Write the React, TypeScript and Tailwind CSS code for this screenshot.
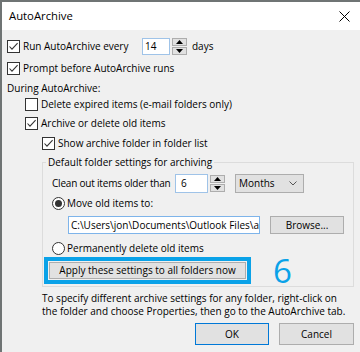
import React from 'react';

const Check: React.FC<{ checked?: boolean }> = ({ checked }) => (
  <span className="flex w-[13px] h-[13px] shrink-0 items-center justify-center border border-[#333333] bg-white">
    {checked && (
      <svg width="11" height="11" viewBox="0 0 11 11" fill="none">
        <path d="M1.5 5.5L4 8.2L9.6 2.2" stroke="#333333" strokeWidth="1.1" />
      </svg>
    )}
  </span>
);

const Radio: React.FC<{ checked?: boolean }> = ({ checked }) => (
  <span className="flex w-[13px] h-[13px] shrink-0 items-center justify-center rounded-full border border-[#333333] bg-white">
    {checked && <span className="w-[7px] h-[7px] rounded-full bg-[#333333]" />}
  </span>
);

const Spinner: React.FC = () => (
  <div className="flex flex-col w-[15px] h-[17px] gap-px">
    <div className="flex flex-1 items-center justify-center border border-[#adadad] bg-[#e1e1e1]">
      <svg width="7" height="4" viewBox="0 0 7 4">
        <path d="M0 4L3.5 0L7 4Z" fill="#000" />
      </svg>
    </div>
    <div className="flex flex-1 items-center justify-center border border-[#adadad] bg-[#e1e1e1]">
      <svg width="7" height="4" viewBox="0 0 7 4">
        <path d="M0 0L3.5 4L7 0Z" fill="#000" />
      </svg>
    </div>
  </div>
);

const Btn: React.FC<{ label: string; className?: string }> = ({ label, className }) => (
  <div
    className={
      'flex shrink-0 items-center justify-center border bg-[#e1e1e1] ' + (className ?? '')
    }
  >
    {label}
  </div>
);

export default function App() {
  return (
    <div className="w-[360px] h-[352px] flex flex-col overflow-hidden whitespace-nowrap border-l-2 border-t-2 border-[#6f7474] bg-[#f0f0f0] text-black font-['Open_Sans',sans-serif] text-[10px]">
      {/* title bar */}
      <div className="h-[28px] shrink-0 flex items-center bg-white pl-[7px] pr-[10px]">
        <span className="text-[11.3px]">AutoArchive</span>
        <svg className="ml-auto" width="11" height="11" viewBox="0 0 11 11">
          <path d="M0.5 0.5L10.5 10.5M10.5 0.5L0.5 10.5" stroke="#000" strokeWidth="1" />
        </svg>
      </div>

      <div className="flex flex-col pl-[5px] pt-[5px]">
        <div className="h-[22px] flex items-center">
          <Check checked />
          <span className="ml-[3px] w-[119px] shrink-0">Run AutoArchive every</span>
          <div className="w-[28px] h-[17px] shrink-0 flex items-center border border-[#9fc3e8] bg-white pl-[2px]">14</div>
          <div className="ml-[2px]">
            <Spinner />
          </div>
          <span className="ml-[5px]">days</span>
        </div>

        <div className="h-[22px] flex items-center">
          <Check checked />
          <span className="ml-[3px]">Prompt before AutoArchive runs</span>
        </div>

        <div className="h-[18px] flex items-center">During AutoArchive:</div>

        <div className="h-[15px] flex items-center pl-[18px]">
          <Check />
          <span className="ml-[3px]">Delete expired items (e-mail folders only)</span>
        </div>

        <div className="h-[22px] flex items-center pl-[18px]">
          <Check checked />
          <span className="ml-[3px]">Archive or delete old items</span>
        </div>

        <div className="h-[18px] flex items-center pl-[35px]">
          <Check checked />
          <span className="ml-[3px]">Show archive folder in folder list</span>
        </div>

        <fieldset className="mt-[2px] ml-[35px] w-[312px] border border-[#dcdcdc] pb-[2px]">
          <legend className="ml-[3px] px-[2px] leading-[16px]">Default folder settings for archiving</legend>

          <div className="mt-[3px] h-[20px] flex items-center pl-[9px]">
            <span className="w-[123px] shrink-0 tracking-[-0.2px]">Clean out items older than</span>
            <div className="w-[33px] h-[19px] shrink-0 flex items-center border border-[#9fc3e8] bg-white pl-[5px]">6</div>
            <div className="ml-[2px]">
              <Spinner />
            </div>
            <div className="ml-[10px] w-[69px] h-[19px] shrink-0 flex items-center border border-[#adadad] bg-[#e1e1e1] pl-[3px] pr-[6px]">
              <span>Months</span>
              <svg className="ml-auto" width="8" height="5" viewBox="0 0 8 5" fill="none">
                <path d="M0.5 0.5L4 4L7.5 0.5" stroke="#555" strokeWidth="1" />
              </svg>
            </div>
          </div>

          <div className="h-[20px] flex items-center pl-[9px]">
            <Radio checked />
            <span className="ml-[2px]">Move old items to:</span>
          </div>

          <div className="mt-[3px] h-[18px] flex items-center pl-[25px]">
            <div className="w-[192px] h-[18px] shrink-0 flex items-center overflow-hidden border border-[#7eb4ea] bg-white pl-[2px]">
              <span>C:\Users\jon\Documents\Outlook Files\a</span>
            </div>
            <Btn label="Browse..." className="ml-[10px] w-[74px] h-[18px] border-[#adadad]" />
          </div>

          <div className="mt-[6px] h-[16px] flex items-center pl-[9px]">
            <Radio />
            <span className="ml-[2px]">Permanently delete old items</span>
          </div>

          <div className="mt-[1px] h-[27px] flex items-center">
            <div className="ml-[1px] w-[207px] h-[27px] shrink-0 border-[4px] border-[#0aa2e8] p-[1px]">
              <Btn label="Apply these settings to all folders now" className="h-full w-full border-[#adadad]" />
            </div>
            <span className="ml-[22px] text-[33px] leading-none text-[#0aa2e8]">6</span>
          </div>
        </fieldset>

        <div className="mt-[5px] ml-[35px] leading-[13px]">
          <div>To specify different archive settings for any folder, right-click on</div>
          <div>the folder and choose Properties, then go to the AutoArchive tab.</div>
        </div>

        <div className="mt-[5px] ml-[188px] flex">
          <Btn label="OK" className="w-[74px] h-[22px] border-[#0078d7]" />
          <Btn label="Cancel" className="ml-[10px] w-[75px] h-[22px] border-[#adadad]" />
        </div>
      </div>
    </div>
  );
}
